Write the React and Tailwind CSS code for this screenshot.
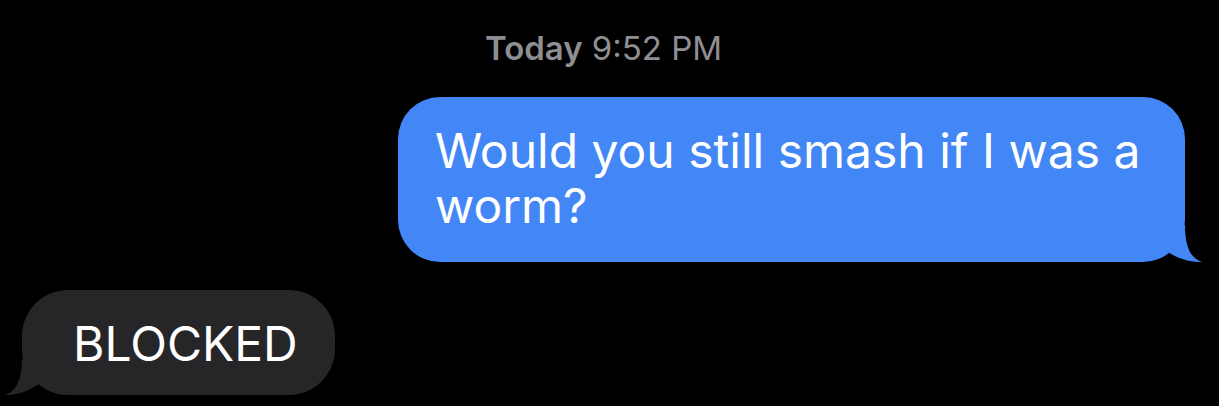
export default function App() {
  return (
    <div
      className="w-[1219px] h-[406px] bg-black overflow-hidden flex flex-col"
      style={{ fontFamily: 'Inter, "Liberation Sans", Arial, sans-serif' }}
    >
      <div className="pt-[28px] flex justify-center pr-[12px] text-[33px] leading-[40px] text-[#8e8e93]">
        <span className="font-semibold">Today</span>
        <span className="ml-[9px]">9:52 PM</span>
      </div>
      <div className="mt-[29px] flex justify-end pr-[34px]">
        <div className="relative w-[787px] h-[165px] rounded-[42px] bg-[#4287f5] pl-[37px] pt-[26px] text-[48px] leading-[55px] text-white">
          Would you still smash if I was a
          <br />
          worm?
          <svg
            className="absolute right-[-18px] bottom-0"
            width="45"
            height="37"
            viewBox="0 0 45 37"
          >
            <path
              d="M0 0 L27 0 C27 24 34 34 44 37 C34 37 22 35 10 27 L0 27 Z"
              fill="#4287f5"
            />
          </svg>
        </div>
      </div>
      <div className="mt-[28px] flex pl-[22px]">
        <div className="relative w-[313px] h-[105px] rounded-[46px] bg-[#262629] pl-[51px] pt-[24px] text-[48px] leading-[60px] text-white">
          BLOCKED
          <svg
            className="absolute left-[-18px] bottom-0"
            width="45"
            height="36"
            viewBox="0 0 45 36"
          >
            <path
              d="M45 0 L18 0 C18 22 11 33 1 36 C11 36 23 34 36 24 L45 24 Z"
              fill="#262629"
            />
          </svg>
        </div>
      </div>
    </div>
  );
}
